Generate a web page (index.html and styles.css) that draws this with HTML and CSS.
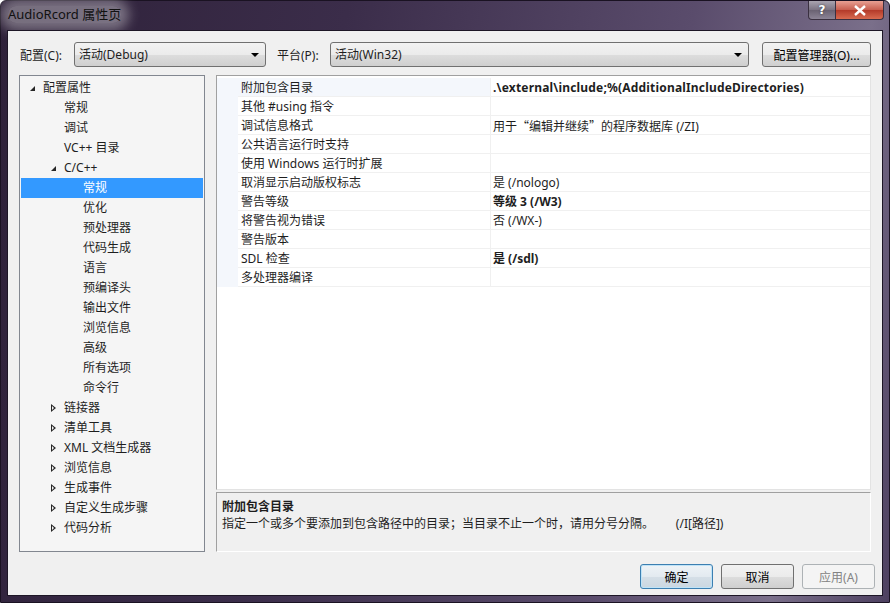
FILE: index.html
```html
<!DOCTYPE html>
<html lang="zh-CN">
<head>
    <meta charset="UTF-8">
    <title>AudioRcord 属性页</title>
    <link rel="stylesheet" href="styles.css">
</head>
<body>
    <div class="window">
        <div class="titlebar">
            <span class="title">AudioRcord 属性页</span>
            <div class="caption-buttons">
                <span class="cap-btn help">?</span>
                <span class="cap-btn close">
                    <svg width="14" height="11" viewBox="0 0 14 11"><path d="M2 1 L12 10 M12 1 L2 10" stroke="#fff" stroke-width="2.4"/></svg>
                </span>
            </div>
        </div>
        <div class="client">
            <div class="toolbar">
                <span class="label">配置(C):</span>
                <div class="combo config-combo">活动(Debug)<span class="arrow"></span></div>
                <span class="label platform-label">平台(P):</span>
                <div class="combo platform-combo">活动(Win32)<span class="arrow"></span></div>
                <button class="btn manager-btn">配置管理器(O)...</button>
            </div>

            <div class="main">
                <div class="tree">
                    <div class="node lvl0"><span class="tw open"></span>配置属性</div>
                    <div class="node lvl1">常规</div>
                    <div class="node lvl1">调试</div>
                    <div class="node lvl1">VC++ 目录</div>
                    <div class="node lvl1x"><span class="tw open"></span>C/C++</div>
                    <div class="node lvl2 selected">常规</div>
                    <div class="node lvl2">优化</div>
                    <div class="node lvl2">预处理器</div>
                    <div class="node lvl2">代码生成</div>
                    <div class="node lvl2">语言</div>
                    <div class="node lvl2">预编译头</div>
                    <div class="node lvl2">输出文件</div>
                    <div class="node lvl2">浏览信息</div>
                    <div class="node lvl2">高级</div>
                    <div class="node lvl2">所有选项</div>
                    <div class="node lvl2">命令行</div>
                    <div class="node lvl1x"><span class="tw closed"></span>链接器</div>
                    <div class="node lvl1x"><span class="tw closed"></span>清单工具</div>
                    <div class="node lvl1x"><span class="tw closed"></span>XML 文档生成器</div>
                    <div class="node lvl1x"><span class="tw closed"></span>浏览信息</div>
                    <div class="node lvl1x"><span class="tw closed"></span>生成事件</div>
                    <div class="node lvl1x"><span class="tw closed"></span>自定义生成步骤</div>
                    <div class="node lvl1x"><span class="tw closed"></span>代码分析</div>
                </div>

                <div class="right">
                    <div class="grid">
                        <div class="row current"><span class="name">附加包含目录</span><span class="value bold wide">.\external\include;%(AdditionalIncludeDirectories)</span></div>
                        <div class="row"><span class="name">其他 #using 指令</span><span class="value"></span></div>
                        <div class="row"><span class="name">调试信息格式</span><span class="value">用于<span class="cjk">“</span>编辑并继续<span class="cjk">”</span>的程序数据库 (/ZI)</span></div>
                        <div class="row"><span class="name">公共语言运行时支持</span><span class="value"></span></div>
                        <div class="row"><span class="name">使用 Windows 运行时扩展</span><span class="value"></span></div>
                        <div class="row"><span class="name">取消显示启动版权标志</span><span class="value">是 (/nologo)</span></div>
                        <div class="row"><span class="name">警告等级</span><span class="value bold">等级 3 (/W3)</span></div>
                        <div class="row"><span class="name">将警告视为错误</span><span class="value">否 (/WX-)</span></div>
                        <div class="row"><span class="name">警告版本</span><span class="value"></span></div>
                        <div class="row"><span class="name">SDL 检查</span><span class="value bold">是 (/sdl)</span></div>
                        <div class="row"><span class="name">多处理器编译</span><span class="value"></span></div>
                        <div class="grid-rest"></div>
                    </div>
                    <div class="description">
                        <div class="desc-title">附加包含目录</div>
                        <div class="desc-text">指定一个或多个要添加到包含路径中的目录；当目录不止一个时，请用分号分隔。&nbsp;&nbsp;&nbsp;&nbsp;&nbsp;&nbsp;&nbsp;(/I[路径])</div>
                    </div>
                </div>
            </div>

            <div class="footer">
                <button class="btn default">确定</button>
                <button class="btn">取消</button>
                <button class="btn disabled">应用(A)</button>
            </div>
        </div>
    </div>
</body>
</html>
```

FILE: styles.css
```css
* {
    margin: 0;
    padding: 0;
    box-sizing: border-box;
}
body {
    width: 890px;
    height: 603px;
    overflow: hidden;
    font-family: "Noto Sans", "Noto Sans CJK SC", sans-serif;
    font-size: 12px;
    color: #1e1e1e;
}
.window {
    width: 890px;
    height: 603px;
    display: flex;
    flex-direction: column;
    background: linear-gradient(100deg, #2e2139 0%, #3b2d4a 35%, #5a4c6c 70%, #7a6f8a 88%, #4d4060 100%);
    border: 1px solid #1a1222;
    border-radius: 6px 6px 0 0;
}
.titlebar {
    height: 29px;
    display: flex;
    justify-content: space-between;
    align-items: flex-start;
    padding-left: 7px;
}
.title {
    margin-top: 5px;
    font-size: 13px;
    color: #111;
    background: rgba(255, 255, 255, 0.35);
    box-shadow: 0 0 12px 8px rgba(255, 255, 255, 0.35);
    border-radius: 8px;
    line-height: 17px;
}
.caption-buttons {
    display: flex;
    margin-right: 5px;
}
.cap-btn {
    height: 19px;
    display: flex;
    align-items: center;
    justify-content: center;
    border: 1px solid #3a3040;
    border-top: none;
}
.help {
    width: 28px;
    border-radius: 0 0 0 4px;
    background: linear-gradient(#a9a4b0, #7a7282 50%, #6a6272 51%, #8c8496);
    color: #fff;
    font-weight: bold;
    font-size: 12px;
    font-family: "DejaVu Sans", sans-serif;
    text-shadow: 0 0 2px #333;
}
.close {
    width: 48px;
    border-left: none;
    border-radius: 0 0 4px 0;
    background: linear-gradient(#e8a093, #c75d4e 50%, #b33a29 51%, #d86a50);
}
.client {
    flex: 1;
    margin: 0 6px 6px 6px;
    background: #f0f0f0;
    border: 1px solid #1d1626;
    display: flex;
    flex-direction: column;
    padding: 11px 11px 0 11px;
}
.toolbar {
    display: flex;
    align-items: center;
    height: 25px;
}
.label {
    width: 55px;
    padding-left: 1px;
}
.platform-label {
    width: 54px;
    margin-left: 10px;
}
.combo {
    position: relative;
    height: 25px;
    line-height: 23px;
    padding-left: 4px;
    border: 1px solid #707070;
    border-radius: 3px;
    background: linear-gradient(#f2f2f2, #ebebeb 50%, #dddddd 51%, #cfcfcf);
}
.config-combo {
    width: 192px;
}
.platform-combo {
    width: 419px;
}
.arrow {
    position: absolute;
    right: 6px;
    top: 10px;
    border-left: 4px solid transparent;
    border-right: 4px solid transparent;
    border-top: 4px solid #000;
}
.btn {
    height: 25px;
    width: 73px;
    font-family: inherit;
    font-size: 12px;
    color: #000;
    border: 1px solid #707070;
    border-radius: 3px;
    background: linear-gradient(#f2f2f2, #ebebeb 50%, #dddddd 51%, #cfcfcf);
}
.manager-btn {
    width: 109px;
    margin-left: 13px;
}
.main {
    display: flex;
    gap: 11px;
    margin-top: 8px;
    height: 477px;
}
.tree {
    width: 186px;
    background: #f5f5f5;
    border: 1px solid #828790;
    padding-top: 2px;
}
.node {
    height: 20px;
    line-height: 20px;
    display: flex;
    align-items: center;
    margin: 0 1px;
}
.lvl0 { padding-left: 7px; }
.lvl1 { padding-left: 43px; }
.lvl1x { padding-left: 28px; }
.lvl2 { padding-left: 62px; }
.selected {
    background: #3399ff;
    color: #fff;
}
.tw {
    width: 15px;
    height: 20px;
    flex: none;
    position: relative;
}
.tw.open::before {
    content: "";
    position: absolute;
    left: 2px;
    top: 8px;
    border-left: 5px solid transparent;
    border-bottom: 5px solid #262626;
}
.tw.closed::before {
    content: "";
    position: absolute;
    left: 2px;
    top: 6px;
    width: 0;
    height: 0;
    border-top: 4px solid transparent;
    border-bottom: 4px solid transparent;
    border-left: 5px solid #262626;
}
.tw.closed::after {
    content: "";
    position: absolute;
    left: 3px;
    top: 8px;
    border-top: 2px solid transparent;
    border-bottom: 2px solid transparent;
    border-left: 2px solid #f5f5f5;
}
.right {
    width: 655px;
    display: flex;
    flex-direction: column;
    gap: 2px;
}
.grid {
    height: 415px;
    display: flex;
    flex-direction: column;
    background: #fff;
    border: 1px solid #a0a0a0;
    border-right-color: #e3e3e3;
    border-bottom-color: #e3e3e3;
    padding-top: 2px;
}
.row {
    display: flex;
    height: 19px;
    line-height: 20px;
    border-left: 21px solid #f4f7fc;
}
.row .name {
    width: 253px;
    padding-left: 3px;
    border-bottom: 1px solid #f0f0f0;
    border-right: 1px solid #f0f0f0;
}
.row .value {
    flex: 1;
    padding-left: 2px;
    border-bottom: 1px solid #f0f0f0;
}
.row.current .name {
    background: #f4f7fc;
}
.bold {
    font-weight: bold;
}
.wide {
    letter-spacing: 0.18px;
}
.cjk {
    font-family: "Noto Sans CJK SC", sans-serif;
}
.grid-rest {
    flex: 1;
}
.description {
    height: 60px;
    border: 1px solid #a0a0a0;
    border-right-color: #fff;
    border-bottom-color: #fff;
    background: #f0f0f0;
    padding: 5px 0 0 5px;
    line-height: 17px;
}
.desc-title {
    font-weight: bold;
}
.footer {
    display: flex;
    justify-content: flex-end;
    gap: 8px;
    margin-top: 12px;
    margin-right: -4px;
}
.btn.default {
    border-color: #3c7fb1;
    box-shadow: inset 0 0 0 1px #bfe3f7;
    background: linear-gradient(#eef3f7, #e3eaf0 50%, #d5dfe7 51%, #cbd7e1);
}
.btn.disabled {
    color: #838383;
    border-color: #adb2b5;
    background: #f4f4f4;
}
```
